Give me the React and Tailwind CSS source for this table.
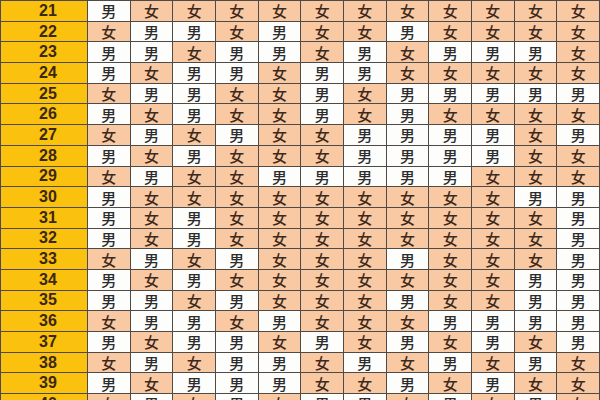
import React from "react";

// rows 21..40, each string is 12 columns: M = 男, F = 女
const rows = [
  [21, "MFFFFFFFFFFF"],
  [22, "FMMFMFFMFFFF"],
  [23, "MMFMMFMFMMMF"],
  [24, "MFMMFMMFFFFF"],
  [25, "FMMFFMFMMMMM"],
  [26, "MFMFFMFMFFFF"],
  [27, "FMFMFFMMMMFM"],
  [28, "MFMFFFMMMMFF"],
  [29, "FMFFMMMMMFFF"],
  [30, "MFFFFFFFFFMM"],
  [31, "MFMFFFFFFFFM"],
  [32, "MFMFFFFFFFFM"],
  [33, "FMFMFFFMFFFM"],
  [34, "MFMFFFFFFFMM"],
  [35, "MMFMFFFMFFMM"],
  [36, "FMMFMFFFMMMM"],
  [37, "MFMMFMFMFMFM"],
  [38, "FMFMMFMFMFMF"],
  [39, "MFMMMFFMFMFF"],
  [40, "FMFMFMMFMFMF"],
];

const Cell = ({ g }) =>
  g === "M" ? (
    <div className="flex items-center justify-center bg-[#fdfdfc] text-[#2c2c2c]">
      男
    </div>
  ) : (
    <div className="flex items-center justify-center bg-[#f8c9a3] text-[#3e2a1c]">
      女
    </div>
  );

export default function App() {
  return (
    <div className="h-[400px] w-[600px] overflow-hidden bg-[#4f4a46]">
      <div
        className="grid grid-cols-[86px_repeat(12,1fr)] auto-rows-[19.7px] gap-px pl-px pr-px pt-px text-[15px] font-medium leading-none"
        style={{ fontFamily: '"Noto Sans CJK SC", "Noto Sans", sans-serif' }}
      >
        {rows.map(([n, cells]) => (
          <React.Fragment key={n}>
            <div className="flex items-center justify-center bg-[#fbc10f] pl-2 font-['Liberation_Sans',sans-serif] text-[16px] font-bold text-[#3a2810]">
              {n}
            </div>
            {cells.split("").map((g, i) => (
              <Cell key={i} g={g} />
            ))}
          </React.Fragment>
        ))}
      </div>
    </div>
  );
}
